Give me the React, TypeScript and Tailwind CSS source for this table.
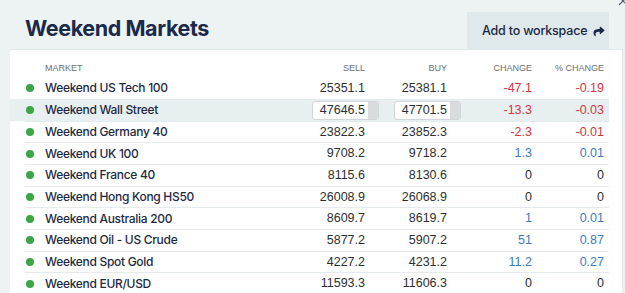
import { FaShare } from 'react-icons/fa';

/**
 * Weekend Markets panel
 * Table of weekend markets with sell / buy prices and daily change.
 */

type Market = {
  name: string;
  sell: string;
  buy: string;
  change: string;
  pct: string;
  selected?: boolean;
};

const markets: Market[] = [
  { name: 'Weekend US Tech 100', sell: '25351.1', buy: '25381.1', change: '-47.1', pct: '-0.19' },
  { name: 'Weekend Wall Street', sell: '47646.5', buy: '47701.5', change: '-13.3', pct: '-0.03', selected: true },
  { name: 'Weekend Germany 40', sell: '23822.3', buy: '23852.3', change: '-2.3', pct: '-0.01' },
  { name: 'Weekend UK 100', sell: '9708.2', buy: '9718.2', change: '1.3', pct: '0.01' },
  { name: 'Weekend France 40', sell: '8115.6', buy: '8130.6', change: '0', pct: '0' },
  { name: 'Weekend Hong Kong HS50', sell: '26008.9', buy: '26068.9', change: '0', pct: '0' },
  { name: 'Weekend Australia 200', sell: '8609.7', buy: '8619.7', change: '1', pct: '0.01' },
  { name: 'Weekend Oil - US Crude', sell: '5877.2', buy: '5907.2', change: '51', pct: '0.87' },
  { name: 'Weekend Spot Gold', sell: '4227.2', buy: '4231.2', change: '11.2', pct: '0.27' },
  { name: 'Weekend EUR/USD', sell: '11593.3', buy: '11606.3', change: '0', pct: '0' },
];

const cols = 'grid grid-cols-[275px_65px_82px_85px_72px] pr-[5px]';

function tone(value: string) {
  if (value.startsWith('-')) return 'text-[#d4363d]';
  if (Number(value) > 0) return 'text-[#3a7cc0]';
  return 'text-[#2b2f33]';
}

/** Price shown inside a small input-like box (selected row) */
function PriceBox({ value }: { value: string }) {
  return (
    <div className="flex justify-end">
      <div className="-mr-[14px] flex h-[19px] w-[67px] items-stretch rounded-[3px] border border-[#cfd5d8] bg-white">
        <span className="flex flex-1 items-center justify-end pr-[3px]">{value}</span>
        <span className="w-[10px] rounded-r-[2px] bg-[#d8dcdf]" />
      </div>
    </div>
  );
}

export default function App() {
  return (
    <div className="relative h-[293px] w-[625px] overflow-hidden bg-[#edf2f3] font-['Inter',sans-serif]">
      {/* Close mark, mostly cut off */}
      <svg className="absolute right-[-3px] top-[-4px] h-[10px] w-[10px]" viewBox="0 0 10 10">
        <path d="M1 1L9 9M9 1L1 9" stroke="#5a6470" strokeWidth="1.2" />
      </svg>

      {/* Header */}
      <div className="flex h-[49px] items-start justify-between pl-[25px] pr-[16px]">
        <h1 className="pt-[14px] text-[21.5px] font-bold leading-[28px] tracking-[-0.4px] text-[#1a2a4b]">
          Weekend Markets
        </h1>
        <button className="mt-[12px] flex h-[37px] w-[142px] items-center gap-[6px] whitespace-nowrap bg-[#dfe8ea] pl-[15px] pt-[1px] text-[12.5px] font-medium tracking-[-0.2px] text-[#1c2945]">
          Add to workspace
          <FaShare className="h-[11px] w-[12px] shrink-0" />
        </button>
      </div>

      {/* Card */}
      <div className="ml-[10px] mr-[2px] h-[260px] rounded-tl-[3px] border-r border-t border-[#e2e8ea] bg-white pr-[13px]">
        {/* Column headings */}
        <div className={`${cols} ml-[15px] h-[27.3px] items-end pb-[3px] font-['Liberation_Sans',sans-serif] text-[9px] leading-[11px] text-[#6b6f73]`}>
          <span className="pl-[20px]">MARKET</span>
          <span className="text-right">SELL</span>
          <span className="text-right">BUY</span>
          <span className="text-right">CHANGE</span>
          <span className="text-right">% CHANGE</span>
        </div>

        {/* Rows */}
        {markets.map((m, i) => (
          <div key={m.name} className={`pl-[15px] ${m.selected ? 'bg-[#e8eff1]' : ''}`}>
            <div
              className={`${cols} h-[21.67px] items-center font-['Liberation_Sans',sans-serif] text-[12.5px] text-[#2b2f33] ${
                i > 0 ? 'border-t border-[#e5eaec]' : ''
              }`}
            >
              <div className="flex items-center">
                <span className="ml-[0.5px] h-[8px] w-[8px] shrink-0 rounded-full bg-[#3ba646]" />
                <span className="ml-[11.5px] whitespace-nowrap font-['Inter',sans-serif] text-[12px] font-medium tracking-[-0.3px] text-[#1e2a44]">
                  {m.name}
                </span>
              </div>
              {m.selected ? <PriceBox value={m.sell} /> : <span className="text-right">{m.sell}</span>}
              {m.selected ? <PriceBox value={m.buy} /> : <span className="text-right">{m.buy}</span>}
              <span className={`text-right ${tone(m.change)}`}>{m.change}</span>
              <span className={`text-right ${tone(m.pct)}`}>{m.pct}</span>
            </div>
          </div>
        ))}
      </div>
    </div>
  );
}
